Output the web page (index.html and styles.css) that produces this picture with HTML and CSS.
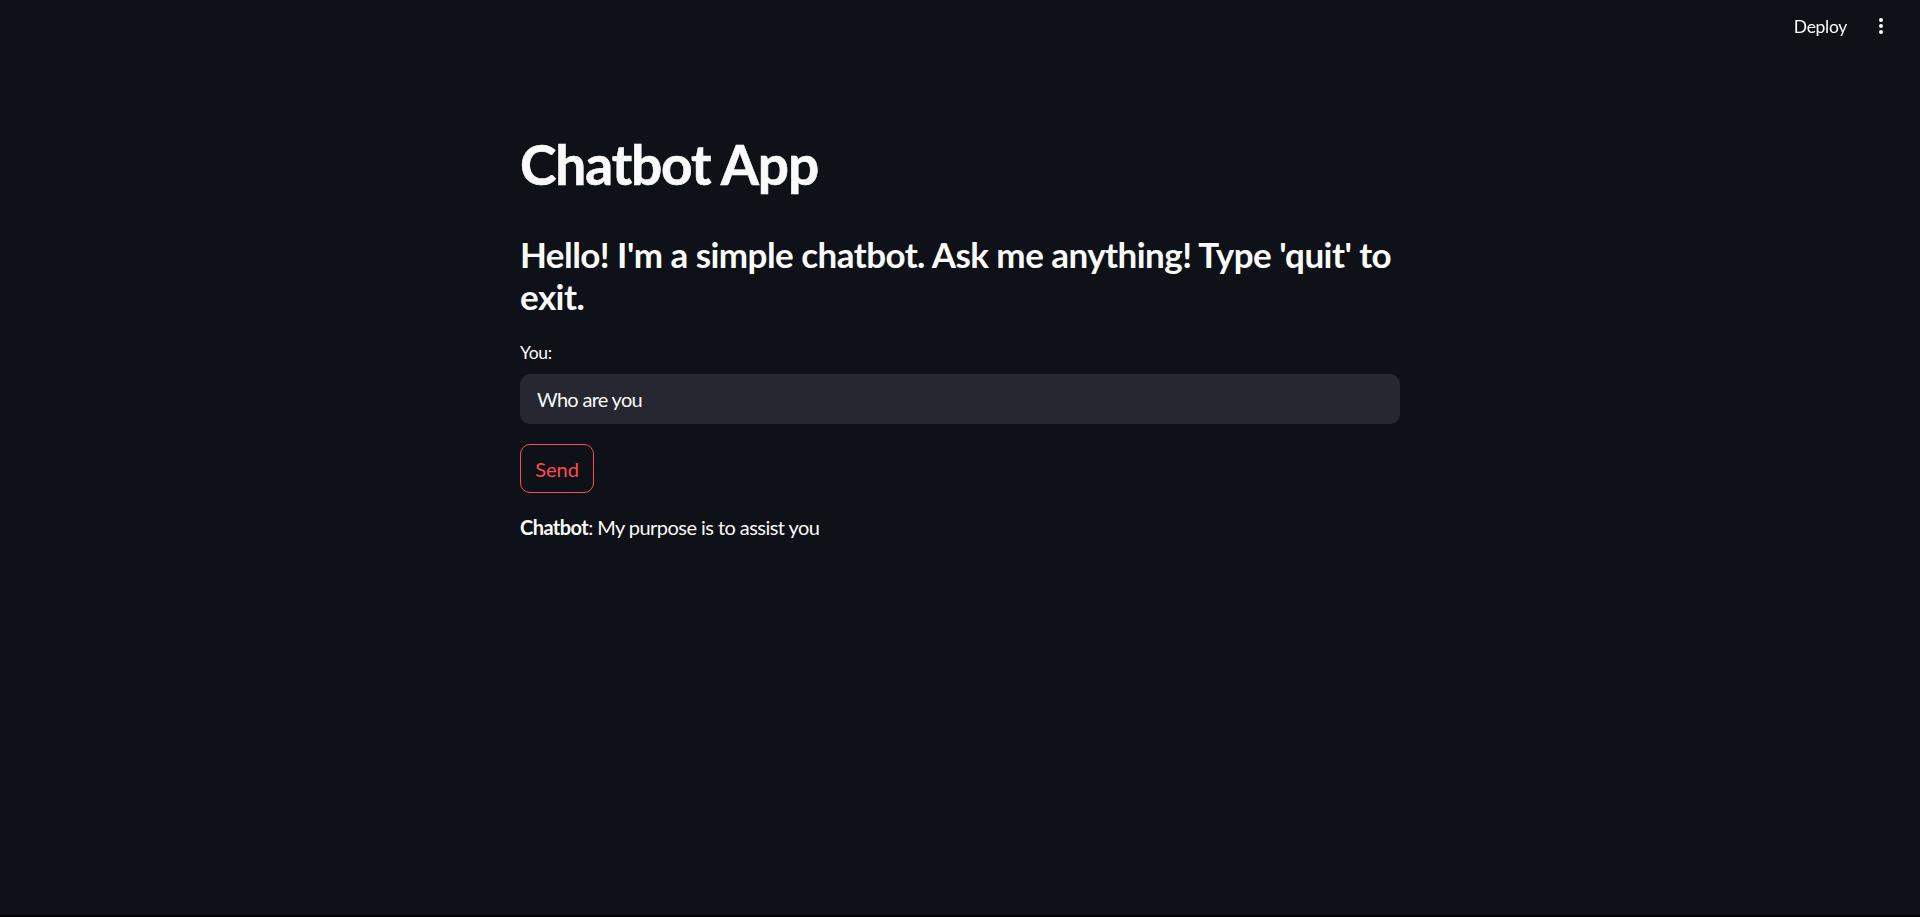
FILE: index.html
```html
<!DOCTYPE html>
<html lang="en">
<head>
<meta charset="utf-8">
<title>Chatbot App</title>
<link rel="stylesheet" href="styles.css">
</head>
<body>
<header class="topbar">
  <span class="deploy">Deploy</span>
  <svg class="menu" width="24" height="24" viewBox="0 0 24 24" aria-hidden="true">
    <circle cx="12" cy="6" r="2" fill="#fafafa"/>
    <circle cx="12" cy="12" r="2" fill="#fafafa"/>
    <circle cx="12" cy="18" r="2" fill="#fafafa"/>
  </svg>
</header>
<main class="main">
  <h1 class="title">Chatbot App</h1>
  <h3 class="subtitle">Hello! I'm a simple chatbot. Ask me anything! Type 'quit' to exit.</h3>
  <label class="label">You:</label>
  <div class="input">Who are you</div>
  <div class="btn-row"><button class="btn">Send</button></div>
  <p class="reply"><strong>Chatbot</strong>: My purpose is to assist you</p>
</main>
</body>
</html>
```

FILE: styles.css
```css
html, body {
  margin: 0;
  padding: 0;
  background: #0e1117;
}
body {
  min-height: 917px;
  box-sizing: border-box;
  border-bottom: 2px solid #000;
  color: #fafafa;
  font-family: Lato, "Noto Sans", sans-serif;
}
.topbar {
  position: fixed;
  top: 0;
  left: 0;
  right: 0;
  height: 52px;
  display: flex;
  justify-content: flex-end;
  align-items: center;
  padding-right: 27px;
  box-sizing: border-box;
}
.deploy {
  font-size: 17.5px;
  line-height: 21px;
  letter-spacing: -0.3px;
  color: #fafafa;
  margin-right: 22px;
}
.menu {
  display: block;
}
.main {
  width: 880px;
  margin: 0 auto;
  padding-top: 131px;
  display: flex;
  flex-direction: column;
}
.title {
  margin: 0;
  font-size: 55px;
  line-height: 66px;
  font-weight: 700;
  letter-spacing: -1.1px;
  -webkit-text-stroke: 0.6px #fafafa;
}
.subtitle {
  margin: 36px 0 0;
  font-size: 35px;
  line-height: 42px;
  font-weight: 700;
  letter-spacing: -0.55px;
}
.label {
  margin-top: 22px;
  font-size: 17.5px;
  line-height: 28px;
  letter-spacing: -0.3px;
}
.input {
  margin-top: 7px;
  height: 50px;
  box-sizing: border-box;
  background: #262730;
  border-radius: 10px;
  padding: 0 17px;
  display: flex;
  align-items: center;
  font-size: 20px;
  letter-spacing: -0.7px;
}
.btn-row {
  margin-top: 20px;
  display: flex;
}
.btn {
  height: 49px;
  width: 74px;
  border: 1px solid #ff4b4b;
  border-radius: 10px;
  background: transparent;
  color: #ff4b4b;
  font-family: Lato, "Noto Sans", sans-serif;
  font-size: 20px;
  padding: 0;
}
.reply {
  margin: 18px 0 0;
  font-size: 20px;
  line-height: 32px;
  letter-spacing: -0.55px;
}
.reply strong {
  font-weight: 700;
}
```
